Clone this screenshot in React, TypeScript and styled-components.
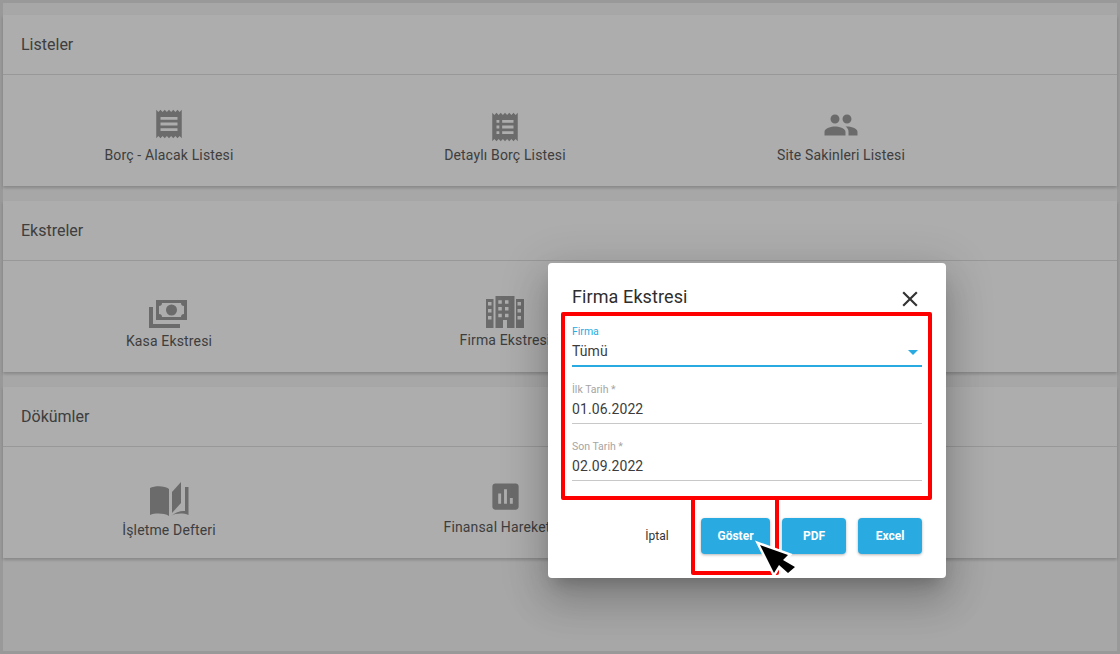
import React from 'react';
import styled, { createGlobalStyle } from 'styled-components';
import { MdAssessment, MdClose, MdPeople, MdReceipt } from 'react-icons/md';

const GlobalStyle = createGlobalStyle`
  html, body {
    margin: 0;
    padding: 0;
    font-family: Roboto, "Liberation Sans", sans-serif;
    overflow: hidden;
  }
`;

const Screen = styled.div`
  position: relative;
  box-sizing: border-box;
  width: 1120px;
  height: 654px;
  border: 3px solid #e2e2e2;
  background: #f7f7f7;
  display: flex;
  flex-direction: column;
  gap: 15px;
  padding-top: 12px;
`;

const Card = styled.section`
  height: 171px;
  flex-shrink: 0;
  background: #fff;
  box-shadow: 0 2px 3px rgba(0, 0, 0, 0.2);
`;

const CardTitle = styled.h2`
  box-sizing: border-box;
  height: 60px;
  margin: 0;
  padding: 0 18px;
  border-bottom: 1px solid #e0e0e0;
  display: flex;
  align-items: center;
  font-size: 16px;
  font-weight: 400;
  color: #5c5c5c;
`;

const ItemGrid = styled.div`
  display: grid;
  grid-template-columns: repeat(3, 336px);
  margin-left: -2px;
`;

const Item = styled.div<{ $top: number; $gap: number }>`
  display: flex;
  flex-direction: column;
  align-items: center;
  padding-top: ${p => p.$top}px;
  gap: ${p => p.$gap}px;
  font-size: 14px;
  line-height: 20px;
  letter-spacing: 0.15px;
  color: #5c5c5c;
  white-space: nowrap;

  svg {
    display: block;
    color: #9e9e9e;
    fill: currentColor;
  }
`;

const Backdrop = styled.div`
  position: absolute;
  inset: -3px;
  background: rgba(0, 0, 0, 0.32);
`;

const Dialog = styled.div`
  position: absolute;
  left: 545px;
  top: 260px;
  box-sizing: border-box;
  width: 398px;
  height: 315px;
  padding: 24px 24px 24px;
  background: #fff;
  border-radius: 4px;
  box-shadow: 0 11px 15px -7px rgba(0, 0, 0, 0.2), 0 24px 38px 3px rgba(0, 0, 0, 0.14), 0 9px 46px 8px rgba(0, 0, 0, 0.12);
`;

const DialogHeader = styled.div`
  display: flex;
  justify-content: space-between;
  align-items: center;
  height: 20px;
  margin-bottom: 17px;
`;

const DialogTitle = styled.h3`
  margin: 0;
  font-size: 18px;
  line-height: 20px;
  font-weight: 400;
  letter-spacing: 0.1px;
  color: #2e2e2e;
`;

const CloseButton = styled.button`
  border: 0;
  padding: 0;
  margin: 4px -1px 0 0;
  background: none;
  color: #333;
  display: flex;
`;

const Fields = styled.div`
  display: flex;
  flex-direction: column;
  gap: 15px;
`;

const Field = styled.div<{ $active?: boolean }>`
  position: relative;
  padding-bottom: 2px;
  border-bottom: ${p => (p.$active ? '2px solid #29abe2' : '1px solid #c8c8c8')};
`;

const FieldLabel = styled.div<{ $active?: boolean }>`
  font-size: 10.5px;
  line-height: 14px;
  padding-top: 1px;
  margin-top: -1px;
  margin-bottom: 1px;
  position: relative;
  top: 1px;
  color: ${p => (p.$active ? '#29abe2' : '#a5a5a5')};
`;

const FieldValue = styled.div`
  font-size: 14px;
  line-height: 24px;
  letter-spacing: 0.1px;
  color: #3c3c3c;
`;

const SelectArrow = styled.span`
  position: absolute;
  right: 4px;
  bottom: 10px;
  width: 0;
  height: 0;
  border-left: 5px solid transparent;
  border-right: 5px solid transparent;
  border-top: 5px solid #29abe2;
`;

const Actions = styled.div`
  display: flex;
  justify-content: flex-end;
  gap: 12px;
  margin-top: 37px;
`;

const ActionButton = styled.button<{ $wide?: boolean; $flat?: boolean }>`
  box-sizing: border-box;
  width: ${p => (p.$wide ? 69 : 64)}px;
  height: 36px;
  padding: 0;
  border: 0;
  border-radius: 4px;
  font-family: inherit;
  font-size: 12px;
  background: ${p => (p.$flat ? 'transparent' : '#29abe2')};
  color: ${p => (p.$flat ? '#333' : '#fff')};
  font-weight: ${p => (p.$flat ? 400 : 700)};
  box-shadow: ${p => (p.$flat ? 'none' : '0 1px 3px rgba(0, 0, 0, 0.3)')};
`;

const Highlight = styled.div<{ $left: number; $top: number; $width: number; $height: number }>`
  position: absolute;
  box-sizing: border-box;
  left: ${p => p.$left}px;
  top: ${p => p.$top}px;
  width: ${p => p.$width}px;
  height: ${p => p.$height}px;
  border: 4px solid #f00;
  border-radius: 2px;
`;

const Cursor = styled.svg`
  position: absolute;
  left: 752px;
  top: 537px;
`;

const receiptList =
  'M3 22l1.5-1.5L6 22l1.5-1.5L9 22l1.5-1.5L12 22l1.5-1.5L15 22l1.5-1.5L18 22l1.5-1.5L21 22V2l-1.5 1.5L18 2l-1.5 1.5L15 2l-1.5 1.5L12 2l-1.5 1.5L9 2 7.5 3.5 6 2 4.5 3.5 3 2z' +
  'M6 7h2v2H6zM10 7h8v2h-8zM6 11h2v2H6zM10 11h8v2h-8zM6 15h2v2H6zM10 15h8v2h-8z';

const ReceiptListIcon = () => (
  <svg width="34" height="34" viewBox="0 0 24 24">
    <path fillRule="evenodd" d={receiptList} />
  </svg>
);

const CashIcon = () => (
  <svg width="40" height="28" viewBox="0 0 40 28">
    <path
      fillRule="evenodd"
      d="M7 0h31v20H7zM13 3q0 3-3 3v8q3 0 3 3h19q0-3 3-3V6q-3 0-3-3zM22.5 4.500a5.500 5.500 0 1 0 0 11 5.500 5.500 0 0 0 0-11z"
    />
    <path d="M0 7h4v17h27v4H0z" />
  </svg>
);

const hole = (x: number, y: number) => `M${x} ${y}h3.5v3.5h-3.5z`;

const buildingWindows = [
  ...[4.3, 11, 17.7].flatMap(y => [hole(12.3, y), hole(19, y)]),
  ...[6, 13, 20].flatMap(y => [hole(2, y), hole(31.5, y)]),
].join('');

const BuildingIcon = () => (
  <svg width="38" height="32" viewBox="0 0 38 32">
    <path
      fillRule="evenodd"
      d={`M0 3h7.5v29H0zM9.5 0h19v32h-7.5v-8h-4v8H9.5zM30 3h8v29h-8z${buildingWindows}`}
    />
  </svg>
);

const BookIcon = () => (
  <svg width="39" height="34" viewBox="0 0 39 34">
    <path d="M0 6C5 3.500 15 3.500 19 7v27C14 31 5 31 0 33z" />
    <path d="M22 10 31 0v21l-9 10z" />
    <path d="M35 5h3.500v28C33 31 26 31 21 34c4-3.500 10-5.500 14-5z" />
  </svg>
);

const App: React.FC = () => (
  <Screen>
    <GlobalStyle />
    <Card>
      <CardTitle>Listeler</CardTitle>
      <ItemGrid>
        <Item $top={32} $gap={4}>
          <MdReceipt size={34} />
          Borç - Alacak Listesi
        </Item>
        <Item $top={35} $gap={1}>
          <ReceiptListIcon />
          Detaylı Borç Listesi
        </Item>
        <Item $top={32} $gap={2}>
          <MdPeople size={36} />
          Site Sakinleri Listesi
        </Item>
      </ItemGrid>
    </Card>
    <Card>
      <CardTitle>Ekstreler</CardTitle>
      <ItemGrid>
        <Item $top={39} $gap={3}>
          <CashIcon />
          Kasa Ekstresi
        </Item>
        <Item $top={35} $gap={2}>
          <BuildingIcon />
          Firma Ekstresi
        </Item>
      </ItemGrid>
    </Card>
    <Card>
      <CardTitle>Dökümler</CardTitle>
      <ItemGrid>
        <Item $top={35} $gap={4}>
          <BookIcon />
          İşletme Defteri
        </Item>
        <Item $top={32} $gap={3}>
          <MdAssessment size={35} />
          Finansal Hareketler
        </Item>
      </ItemGrid>
    </Card>

    <Backdrop />
    <Dialog>
      <DialogHeader>
        <DialogTitle>Firma Ekstresi</DialogTitle>
        <CloseButton>
          <MdClose size={26} />
        </CloseButton>
      </DialogHeader>
      <Fields>
        <Field $active>
          <FieldLabel $active>Firma</FieldLabel>
          <FieldValue>Tümü</FieldValue>
          <SelectArrow />
        </Field>
        <Field>
          <FieldLabel>İlk Tarih *</FieldLabel>
          <FieldValue>01.06.2022</FieldValue>
        </Field>
        <Field>
          <FieldLabel>Son Tarih *</FieldLabel>
          <FieldValue>02.09.2022</FieldValue>
        </Field>
      </Fields>
      <Actions>
        <ActionButton $flat>İptal</ActionButton>
        <ActionButton $wide>Göster</ActionButton>
        <ActionButton>PDF</ActionButton>
        <ActionButton>Excel</ActionButton>
      </Actions>
    </Dialog>

    <Highlight $left={558} $top={309} $width={371} $height={188} />
    <Highlight $left={688} $top={493} $width={88} $height={79} />
    <Cursor width="50" height="44" viewBox="0 0 50 44">
      <polygon
        points="5,5 33,15 28,20 40,27 33,33 24,25 19,33"
        fill="#000"
        stroke="#fff"
        strokeWidth="5"
        paintOrder="stroke"
      />
    </Cursor>
  </Screen>
);

export default App;
